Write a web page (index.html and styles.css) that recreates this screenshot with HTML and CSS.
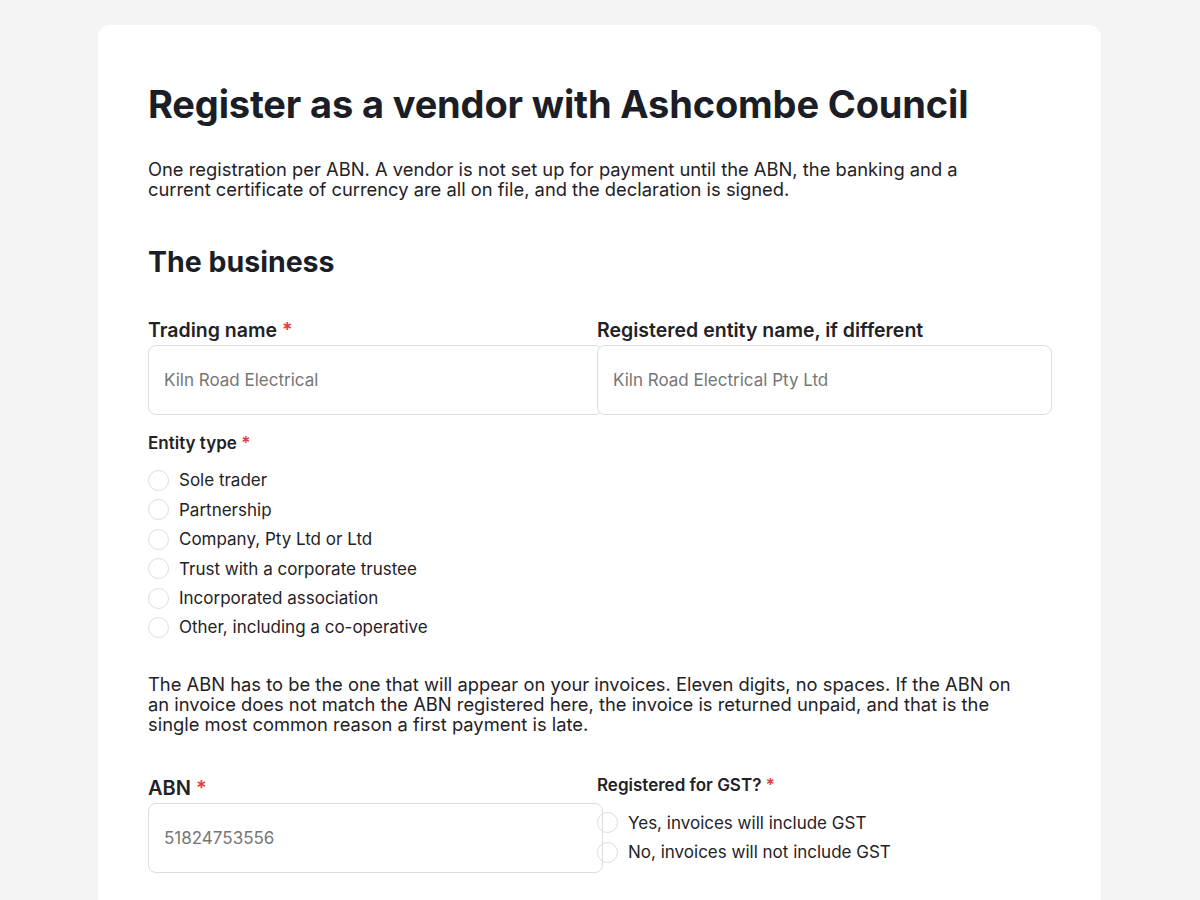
FILE: index.html
```html
<!DOCTYPE html>
<html lang="en">

<head>
    <meta charset="UTF-8" />
    <meta name="viewport" content="width=device-width, initial-scale=1.0" />
    <title>Register as a vendor</title>
    <link rel="stylesheet" href="styles.css">
</head>

<body>
    <div class="card">
        <h1 class="title">Register as a vendor with Ashcombe Council</h1>
        <p class="lead">One registration per ABN. A vendor is not set up for payment until the ABN, the banking and a
            current certificate of currency are all on file, and the declaration is signed.</p>

        <h2 class="section_title">The business</h2>

        <div class="row">
            <div class="field">
                <label class="label" for="trading">Trading name <span class="req">*</span></label>
                <input id="trading" type="text" class="text_in" placeholder="Kiln Road Electrical" />
            </div>
            <div class="field">
                <label class="label" for="entity">Registered entity name, if different</label>
                <input id="entity" type="text" class="text_in" placeholder="Kiln Road Electrical Pty Ltd" />
            </div>
        </div>

        <div class="group">
            <div class="label_sm">Entity type <span class="req">*</span></div>
            <label class="radio"><span class="dot"></span>Sole trader</label>
            <label class="radio"><span class="dot"></span>Partnership</label>
            <label class="radio"><span class="dot"></span>Company, Pty Ltd or Ltd</label>
            <label class="radio"><span class="dot"></span>Trust with a corporate trustee</label>
            <label class="radio"><span class="dot"></span>Incorporated association</label>
            <label class="radio"><span class="dot"></span>Other, including a co-operative</label>
        </div>

        <p class="note">The ABN has to be the one that will appear on your invoices. Eleven digits, no spaces. If the ABN on
            an invoice does not match the ABN registered here, the invoice is returned unpaid, and that is the
            single most common reason a first payment is late.</p>

        <div class="row row_abn">
            <div class="field">
                <label class="label label_lg" for="abn">ABN <span class="req">*</span></label>
                <input id="abn" type="text" class="text_in" placeholder="51824753556" />
            </div>
            <div class="field field_gst">
                <div class="label_sm">Registered for GST? <span class="req">*</span></div>
                <label class="radio"><span class="dot"></span>Yes, invoices will include GST</label>
                <label class="radio"><span class="dot"></span>No, invoices will not include GST</label>
            </div>
        </div>
    </div>
</body>

</html>
```

FILE: styles.css
```css
body {
    margin: 0;
    background: #f4f4f4;
    font-family: Inter, "Liberation Sans", sans-serif;
    color: #1f2227;
}

.card {
    width: 903px;
    margin: 25px 0 0 98px;
    padding: 50px 50px 80px 50px;
    background: #fff;
    border-radius: 12px;
}

.title {
    margin: 7px 0 0 0;
    font-size: 38px;
    line-height: 1.2;
    font-weight: 700;
    color: #1b1e26;
    letter-spacing: -0.15px;
}

.lead {
    margin: 31px 0 0 0;
    font-size: 18.35px;
    line-height: 20px;
    width: 850px;
}

.section_title {
    margin: 46px 0 0 0;
    font-size: 28.5px;
    line-height: 1.2;
    font-weight: 700;
    color: #1b1e26;
}

.row {
    display: grid;
    grid-template-columns: 449px 455px;
    margin-top: 40px;
}

.row_abn {
    margin-top: 43px;
}

.field {
    display: flex;
    flex-direction: column;
}

.label {
    font-size: 19.5px;
    font-weight: 600;
    line-height: 22px;
    margin-bottom: 4px;
}

.label_lg {
    font-size: 20px;
}

.label_sm {
    font-size: 17px;
    font-weight: 600;
    line-height: 20px;
    margin-bottom: 13px;
}

.field_gst .label_sm {
    margin-top: -2px;
}

.req {
    color: #e5393d;
}

.text_in {
    box-sizing: border-box;
    width: 455px;
    height: 70px;
    padding: 0 15px;
    border: 1px solid #dcdde0;
    border-radius: 8px;
    font-family: Inter, "Liberation Sans", sans-serif;
    font-size: 17px;
    color: #1f2227;
    background: #fff;
}

.text_in::placeholder {
    color: #767676;
}

.group {
    margin-top: 18px;
    display: flex;
    flex-direction: column;
}

.radio {
    display: flex;
    align-items: center;
    height: 29.4px;
    font-size: 17px;
    position: relative;
}

.dot {
    box-sizing: border-box;
    width: 21px;
    height: 21px;
    border: 1px solid #dcdde0;
    border-radius: 50%;
    margin-right: 10px;
    background: #fff;
}

.field_gst .dot {
    background: transparent;
}

.note {
    margin: 32px 0 0 0;
    font-size: 18.35px;
    line-height: 20px;
    width: 870px;
}
```
